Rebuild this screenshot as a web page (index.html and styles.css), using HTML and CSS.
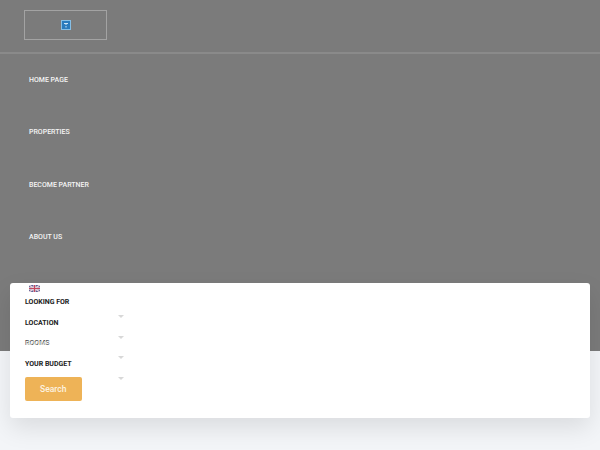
FILE: index.html
```html
<!DOCTYPE html>
<html lang="en">
<head>
    <meta charset="UTF-8">
    <meta name="viewport" content="width=device-width, initial-scale=1.0">
    <title>Home Page</title>
    <link rel="stylesheet" href="styles.css">
</head>
<body>
    <header class="hero">
        <div class="logo-bar">
            <a class="logo-box" href="#">
                <svg class="logo-icon" width="10" height="10" viewBox="0 0 10 10">
                    <rect x="0.5" y="0.5" width="9" height="9" fill="#2b7cbd" stroke="#86bfe6"/>
                    <path d="M3 3.5h4M5 3.5v1.5M5 6v1.5" stroke="#cfe6f7" fill="none"/>
                </svg>
            </a>
        </div>
        <nav class="nav">
            <a class="nav-item" href="#">HOME PAGE</a>
            <a class="nav-item" href="#">PROPERTIES</a>
            <a class="nav-item" href="#">BECOME PARTNER</a>
            <a class="nav-item" href="#">ABOUT US</a>
            <a class="nav-item nav-flag" href="#">
                <svg width="11" height="7" viewBox="0 0 11 7">
                    <rect width="11" height="7" fill="#5a5f96"/>
                    <path d="M0 0l11 7M11 0L0 7" stroke="#e6d3dc" stroke-width="1.4"/>
                    <path d="M5.5 0v7M0 3.5h11" stroke="#e6d3dc" stroke-width="2.4"/>
                    <path d="M5.5 0v7M0 3.5h11" stroke="#c4475f" stroke-width="1.2"/>
                </svg>
            </a>
        </nav>
    </header>

    <main class="content">
        <form class="search-card">
            <div class="field">LOOKING FOR</div>
            <div class="field">LOCATION</div>
            <div class="field field-rooms">ROOMS<span class="field-ghost">ROOMS</span></div>
            <div class="field">YOUR BUDGET</div>
            <button class="search-button" type="button">Search</button>
        </form>
    </main>
</body>
</html>
```

FILE: styles.css
```css
* {
    box-sizing: border-box;
}

body {
    font-family: Roboto, Arial, sans-serif;
    background-color: #f3f5f8;
    margin: 0;
    height: 450px;
    overflow: hidden;
    text-rendering: geometricPrecision;
}

.hero {
    height: 351px;
    background-color: #7b7b7b;
}

.logo-bar {
    height: 54px;
    padding: 10px 24px 0;
    border-bottom: 2px solid #8a8a8a;
}

.logo-box {
    width: 83px;
    height: 30px;
    padding-bottom: 1px;
    border: 1px solid #a3a3a3;
    display: flex;
    align-items: center;
    justify-content: center;
}

.nav {
    display: flex;
    flex-direction: column;
    align-items: flex-start;
    padding: 0 29px;
    position: relative;
    z-index: 2;
}

.nav-item {
    height: 52.5px;
    padding-top: 19.5px;
    font-size: 7px;
    line-height: 12px;
    font-weight: 500;
    color: #f4f4f4;
    text-decoration: none;
}

.nav-flag {
    padding-top: 21px;
}

.nav-flag svg {
    display: block;
}

.content {
    padding: 0 10px;
}

.search-card {
    position: relative;
    margin-top: -68px;
    height: 135px;
    padding: 13px 15px 0;
    background-color: white;
    border-radius: 3px;
    box-shadow: 0 10px 25px rgba(0, 0, 0, 0.1);
}

.field {
    position: relative;
    height: 20.6px;
    font-size: 7px;
    line-height: 12px;
    font-weight: 700;
    color: #222;
}

.field::after {
    content: "";
    position: absolute;
    left: 93px;
    top: 19px;
    border-left: 3px solid transparent;
    border-right: 3px solid transparent;
    border-top: 3px solid #d8d8d8;
}

.field-rooms {
    font-weight: 700;
    color: #555;
}

.field-ghost {
    position: absolute;
    left: 0.5px;
    top: 0.5px;
    color: #fff;
    opacity: 0.7;
}

.search-button {
    display: block;
    width: 57.5px;
    height: 24px;
    margin: -1px 0 0 -0.5px;
    background-color: #eeb357;
    color: #fdf3e2;
    border: none;
    border-radius: 2px;
    font-family: Roboto, Arial, sans-serif;
    font-size: 8.5px;
    font-weight: 500;
}
```
